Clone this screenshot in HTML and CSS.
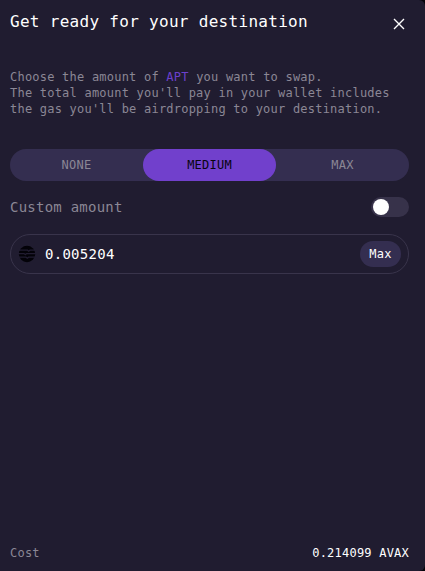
FILE: index.html
```html
<!DOCTYPE html>
<html lang="en">
<head>
<meta charset="utf-8">
<title>Get ready for your destination</title>
<link rel="stylesheet" href="styles.css">
</head>
<body>
<main class="panel">
  <header class="header">
    <h1 class="title">Get ready for your destination</h1>
    <button class="close" aria-label="Close">
      <svg width="12" height="12" viewBox="0 0 12 12"><path d="M1 1l10 10M11 1L1 11" stroke="#fff" stroke-width="1.35" fill="none"/></svg>
    </button>
  </header>
  <p class="intro">Choose the amount of <span class="token">APT</span> you want to swap.<br>The total amount you'll pay in your wallet includes<br>the gas you'll be airdropping to your destination.</p>
  <div class="segments">
    <button class="segment">NONE</button>
    <button class="segment active">MEDIUM</button>
    <button class="segment">MAX</button>
  </div>
  <div class="custom">
    <span>Custom amount</span>
    <span class="switch"><span class="knob"></span></span>
  </div>
  <div class="field">
    <svg class="coin" width="18" height="18" viewBox="0 0 18 18">
      <circle cx="9" cy="9" r="8.2" fill="#030208"/>
      <path d="M0 5.2h9.5l1.2 1 1.3-1h6M0 8.6h6l1.3 1 1.3-1H18M0 12.2h8l1.3 1 1.3-1H18" stroke="#211c31" stroke-width="1.3" fill="none"/>
    </svg>
    <span class="value">0.005204</span>
    <button class="max">Max</button>
  </div>
  <footer class="footer">
    <span>Cost</span>
    <span class="cost">0.214099 AVAX</span>
  </footer>
</main>
</body>
</html>
```

FILE: styles.css
```css
* {
  box-sizing: border-box;
}

body {
  margin: 0;
  background: #05040a;
}

button {
  border: 0;
  padding: 0;
  background: none;
  color: inherit;
  font: inherit;
  letter-spacing: inherit;
}

.panel {
  display: flex;
  flex-direction: column;
  width: 425px;
  height: 571px;
  padding: 9px 16px 10px 10px;
  border-radius: 0 6px 6px 0;
  background: #201c30;
  color: #8b8795;
  font: 12px/16px "DejaVu Sans Mono", monospace;
  letter-spacing: 0.22px;
}

.header {
  display: flex;
  justify-content: space-between;
  height: 60px;
}

.title {
  margin: 0;
  color: #fff;
  font-size: 16px;
  font-weight: 400;
  line-height: 26px;
  letter-spacing: 0.3px;
}

.close {
  display: flex;
  align-items: center;
  justify-content: center;
  width: 20px;
  height: 30px;
}

.intro {
  margin: 0;
  white-space: nowrap;
}

.token {
  color: #6c40cc;
}

.segments {
  display: flex;
  flex: none;
  height: 32px;
  margin-top: 32px;
  border-radius: 16px;
  background: #342e50;
}

.segment {
  flex: 1;
  border-radius: 16px;
}

.active {
  background: #7140cc;
  color: #08050f;
}

.custom {
  display: flex;
  align-items: center;
  justify-content: space-between;
  height: 20px;
  margin-top: 16px;
  font-size: 14px;
  letter-spacing: 0.24px;
}

.switch {
  display: flex;
  align-items: center;
  width: 38px;
  height: 20px;
  padding-left: 2px;
  border-radius: 10px;
  background: #37324a;
}

.knob {
  width: 16px;
  height: 16px;
  border-radius: 50%;
  background: #fff;
}

.field {
  display: flex;
  align-items: center;
  height: 40px;
  margin-top: 17px;
  padding: 0 7px;
  border: 1px solid #39344b;
  border-radius: 20px;
}

.value {
  flex: 1;
  margin-left: 9px;
  color: #fff;
  font-size: 14px;
  letter-spacing: 0.27px;
}

.max {
  width: 41px;
  height: 26px;
  border-radius: 13px;
  background: #342e50;
  color: #fff;
}

.footer {
  display: flex;
  justify-content: space-between;
  margin-top: auto;
}

.cost {
  color: #fff;
}
```
